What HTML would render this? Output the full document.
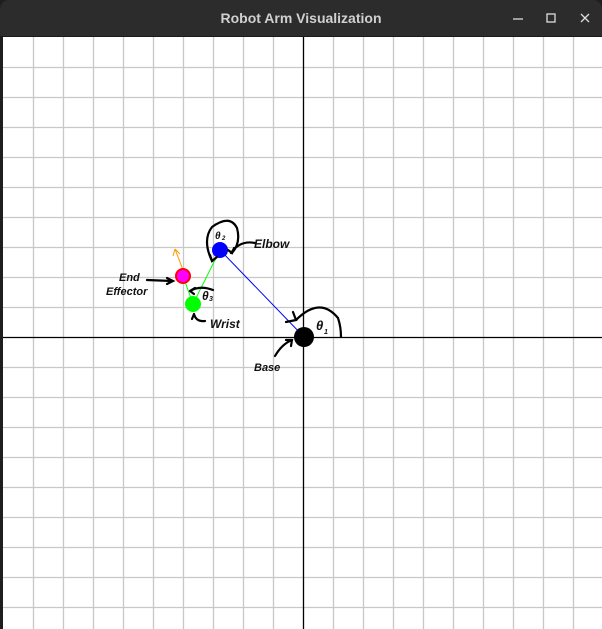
<!DOCTYPE html>
<html><head><style>
body{margin:0;width:602px;height:629px;overflow:hidden;background:#1e1e1e;font-family:"Liberation Sans",sans-serif}
.tb{position:absolute;left:0;top:0;width:602px;height:37px;background:#2c2c2c;border-radius:9px 9px 0 0;border-bottom:1px solid #1a1a1a;box-sizing:border-box}
.t{position:absolute;left:0;width:602px;top:10px;text-align:center;color:#d0d0d0;font-weight:bold;font-size:14px}
</style></head><body>
<div class="tb"><div class="t">Robot Arm Visualization</div>
<svg style="position:absolute;left:0;top:0" width="602" height="37">
<line x1="513" y1="19" x2="523" y2="19" stroke="#ddd" stroke-width="1.3"/>
<rect x="547" y="14" width="8" height="8" fill="none" stroke="#ddd" stroke-width="1.3"/>
<path d="M581 14 L589 22 M589 14 L581 22" stroke="#ddd" stroke-width="1.3"/>
</svg></div>
<svg style="position:absolute;left:3px;top:37px" width="599" height="592" viewBox="3 37 599 592">
<rect x="3" y="37" width="599" height="592" fill="#fff"/>
<g stroke="#c8c8c8" stroke-width="1.3">
<path d="M33.5 37V629M63.5 37V629M93.5 37V629M123.5 37V629M153.5 37V629M183.5 37V629M213.5 37V629M243.5 37V629M273.5 37V629M333.5 37V629M363.5 37V629M393.5 37V629M423.5 37V629M453.5 37V629M483.5 37V629M513.5 37V629M543.5 37V629M573.5 37V629
M3 67.5H602M3 97.5H602M3 127.5H602M3 157.5H602M3 187.5H602M3 217.5H602M3 247.5H602M3 277.5H602M3 307.5H602M3 367.5H602M3 397.5H602M3 427.5H602M3 457.5H602M3 487.5H602M3 517.5H602M3 547.5H602M3 577.5H602M3 607.5H602"/>
</g>
<path d="M303.5 37V629M3 337.5H602" stroke="#000" stroke-width="1.3"/>
<line x1="304" y1="337" x2="220" y2="250" stroke="#00f" stroke-width="1"/>
<line x1="220" y1="250" x2="193" y2="304" stroke="#0f0" stroke-width="1"/>
<line x1="193" y1="304" x2="183" y2="276" stroke="#0f0" stroke-width="1"/>
<path d="M183 270 L175 249 M175 249 L173 256 M175 249 L180 254" stroke="#f90" stroke-width="1" fill="none"/>
<circle cx="304" cy="337" r="10" fill="#000"/>
<circle cx="220" cy="250" r="8" fill="#00f"/>
<circle cx="193" cy="304" r="8" fill="#0f0"/>
<circle cx="183" cy="276" r="7" fill="#f0f" stroke="#f00" stroke-width="2"/>
<g fill="none" stroke="#000" stroke-width="2.2" stroke-linecap="round">
<path d="M296 320 Q320 296 338 318 Q341 327 341 337"/>
<path d="M286 322 L296 320 L293 312"/>
<path d="M212 261 Q202 240 212 227 Q230 214 237 228 Q241 243 232 253"/>
<path d="M210 255 L212 261 L217 257"/>
<path d="M231 253 Q240 240 255 243"/>
<path d="M228 250 L232 253 L234 248"/>
<path d="M147 280 L172 281 M167 278 L173 281 L167 284"/>
<path d="M213 290 Q200 285 190 291 M190 291 L195 288 M190 291 L194 294"/>
<path d="M205 321 Q196 322 194 314 M194 314 L192 319"/>
<path d="M275 356 Q282 344 292 340 M286 340 L292 340 L291 346"/>
</g>
<g font-family="'Liberation Sans',sans-serif" font-weight="bold" fill="#111" font-style="italic">
<text x="316" y="330" font-size="13">θ</text><text x="324" y="334" font-size="7">1</text>
<text x="215" y="239" font-size="10">θ</text><text x="222" y="240" font-size="6">2</text>
<text x="202" y="300" font-size="12">θ</text><text x="209" y="301" font-size="7">3</text>
<text x="254" y="248" font-size="12">Elbow</text>
<text x="210" y="328" font-size="12">Wrist</text>
<text x="254" y="371" font-size="11">Base</text>
<text x="119" y="281" font-size="11">End</text>
<text x="106" y="295" font-size="11">Effector</text>
</g>
</svg>
<div style="position:absolute;left:0;top:37px;width:3px;height:592px;background:#1e1e1e"></div>
</body></html>
